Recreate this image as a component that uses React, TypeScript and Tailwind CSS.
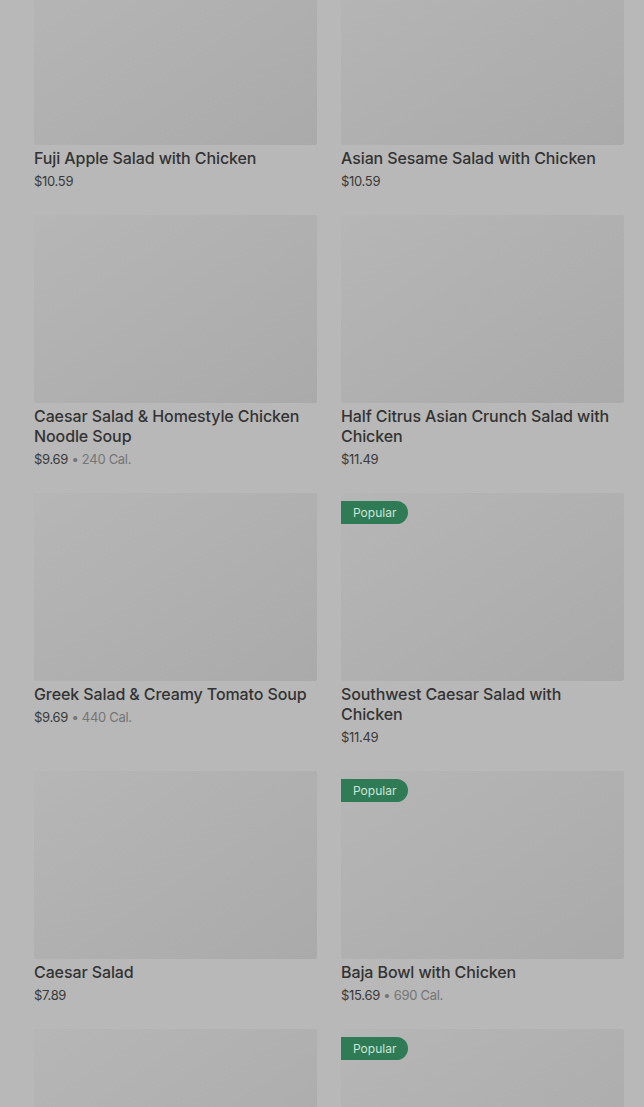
type Item = {
  name: string
  price: string
  cal?: string
  popular?: boolean
}

const items: Item[] = [
  { name: 'Fuji Apple Salad with Chicken', price: '$10.59' },
  { name: 'Asian Sesame Salad with Chicken', price: '$10.59' },
  { name: 'Caesar Salad & Homestyle Chicken Noodle Soup', price: '$9.69', cal: '240 Cal.' },
  { name: 'Half Citrus Asian Crunch Salad with Chicken', price: '$11.49' },
  { name: 'Greek Salad & Creamy Tomato Soup', price: '$9.69', cal: '440 Cal.' },
  { name: 'Southwest Caesar Salad with Chicken', price: '$11.49', popular: true },
  { name: 'Caesar Salad', price: '$7.89' },
  { name: 'Baja Bowl with Chicken', price: '$15.69', cal: '690 Cal.', popular: true },
  { name: 'BBQ Chicken Salad', price: '$10.59' },
  { name: 'Chicken Cobb Salad', price: '$11.49', popular: true },
]

function MenuCard({ item }: { item: Item }) {
  return (
    <div className="flex flex-col">
      <div className="relative h-[188px] w-full rounded-[2px] bg-gradient-to-br from-[#b6b6b6] via-[#b0b0b0] to-[#aaaaaa]">
        {item.popular && (
          <span className="absolute left-0 top-[8px] flex h-[23px] items-center rounded-r-full rounded-l-[3px] bg-[#2e7b55] pl-[12px] pr-[12px] text-[12px] leading-none text-[#cfe5d7]">
            Popular
          </span>
        )}
      </div>
      <h3 className="mt-[3px] text-[16px] leading-[20px] font-medium tracking-[-0.1px] text-[#333333]">
        {item.name}
      </h3>
      <p className="mt-[4px] text-[13px] leading-[18px] tracking-[-0.3px] text-[#3a3a3a]">
        {item.price}
        {item.cal && (
          <span className="text-[#757575]">
            {' • '}
            {item.cal}
          </span>
        )}
      </p>
    </div>
  )
}

export default function App() {
  return (
    <div
      className="h-[1107px] overflow-hidden bg-[#b8b8b8]"
      style={{ fontFamily: 'Inter, "Noto Sans", sans-serif' }}
    >
      <div className="-mt-[43px] grid grid-cols-2 gap-x-[24px] gap-y-[25px] pl-[34px] pr-[20px]">
        {items.map((item) => (
          <MenuCard key={item.name} item={item} />
        ))}
      </div>
    </div>
  )
}
